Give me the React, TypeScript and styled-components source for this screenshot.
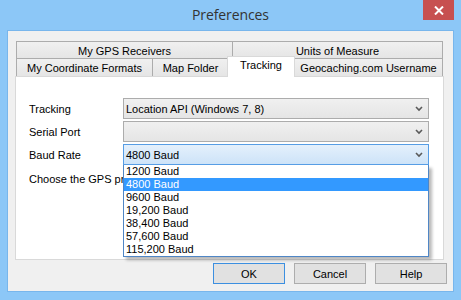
import React from "react";
import styled, { createGlobalStyle } from "styled-components";

const Global = createGlobalStyle`
  html, body { margin: 0; padding: 0; }
  body { width: 461px; height: 300px; overflow: hidden; font-family: "Liberation Sans", Arial, sans-serif; }
`;

const Window = styled.div`
  width: 461px;
  height: 300px;
  background: #8cc7f7;
  display: flex;
  flex-direction: column;
  box-sizing: border-box;
`;

const TitleBar = styled.div`
  height: 30px;
  flex: none;
  display: grid;
  grid-template-columns: 1fr auto 1fr;
  align-items: start;
`;

const Title = styled.div`
  grid-column: 2;
  font-family: "Open Sans", "Liberation Sans", Arial, sans-serif;
  font-size: 14px;
  color: #333;
  line-height: 30px;
  letter-spacing: -0.1px;
`;

const CloseButton = styled.div`
  grid-column: 3;
  justify-self: end;
  margin-right: 7px;
  width: 31px;
  height: 20px;
  background: #c75050;
  display: flex;
  align-items: center;
  justify-content: center;
`;

const Client = styled.div`
  flex: 1;
  margin: 0 7px 8px 7px;
  border: 1px solid #78b6ec;
  background: #f0f0f0;
  padding: 10px 6px 0 7px;
  display: flex;
  flex-direction: column;
  font-size: 11px;
  color: #000;
`;

const TabControl = styled.div`
  width: 429px;
  display: flex;
  flex-direction: column;
`;

const TabRow = styled.div<{ $h: number }>`
  display: flex;
  align-items: flex-end;
  height: ${(p) => p.$h}px;
  padding-left: 1px;
`;

const Tab = styled.div<{ $w: number; $first?: boolean; $selected?: boolean }>`
  box-sizing: border-box;
  width: ${(p) => p.$w}px;
  height: 100%;
  margin-left: ${(p) => (p.$first ? 0 : p.$selected ? -2 : -1)}px;
  border: 1px solid #acacac;
  border-bottom: none;
  background: linear-gradient(#f0f0f0, #e5e5e5);
  display: flex;
  align-items: center;
  justify-content: center;
  white-space: nowrap;
  padding-top: 1px;
  ${(p) =>
    p.$selected &&
    `
    background: #fff;
    border-color: #d9d9d9;
    align-self: flex-end;
    margin-top: -2px;
    margin-bottom: -1px;
    height: 21px;
    position: relative;
    z-index: 1;
    align-items: flex-start;
    padding-top: 2px;
  `}
`;

const Panel = styled.div`
  box-sizing: border-box;
  height: 184px;
  border: 1px solid #d9d9d9;
  background: #fff;
  padding: 21px 13px 0 13px;
`;

const FormGrid = styled.div`
  display: grid;
  grid-template-columns: 94px 306px;
  grid-auto-rows: 21px;
  row-gap: 2px;
  align-items: center;
`;

const Label = styled.div`
  white-space: nowrap;
`;

const ClippedLabel = styled.div`
  grid-column: 1;
  margin-top: 3px;
  white-space: nowrap;
  overflow: hidden;
  width: 94px;
`;

const ComboWrap = styled.div`
  position: relative;
  height: 21px;
`;

const Combo = styled.div<{ $focused?: boolean }>`
  box-sizing: border-box;
  height: 21px;
  border: 1px solid ${(p) => (p.$focused ? "#569de5" : "#acacac")};
  background: ${(p) =>
    p.$focused ? "linear-gradient(#e4f0fc, #cde3f8)" : "linear-gradient(#f0f0f0, #e5e5e5)"};
  display: flex;
  align-items: center;
  justify-content: space-between;
  padding: 0 5px 0 2px;
`;

const DropList = styled.div`
  position: absolute;
  top: 21px;
  left: 0;
  width: 306px;
  box-sizing: border-box;
  border: 1px solid #4f86c6;
  border-top: none;
  background: #fff;
  box-shadow: 3px 3px 3px rgba(0, 0, 0, 0.28);
  z-index: 5;
`;

const Option = styled.div<{ $active?: boolean }>`
  height: 13px;
  line-height: 13px;
  padding-left: 2px;
  background: ${(p) => (p.$active ? "#3399ff" : "transparent")};
  color: ${(p) => (p.$active ? "#fff" : "#000")};
  white-space: nowrap;
`;

const ButtonRow = styled.div`
  display: flex;
  justify-content: flex-end;
  gap: 9px;
  margin-top: 3px;
`;

const Button = styled.div<{ $default?: boolean }>`
  box-sizing: border-box;
  width: 72px;
  height: 21px;
  border: 1px solid ${(p) => (p.$default ? "#3c8fe0" : "#adadad")};
  background: #e1e1e1;
  display: flex;
  align-items: center;
  justify-content: center;
`;

const Chevron = () => (
  <svg width="8" height="6" viewBox="0 0 8 6">
    <path d="M1 1 L4 4 L7 1" fill="none" stroke="#5a5a5a" strokeWidth="1.6" />
  </svg>
);

const bauds = ["1200 Baud", "4800 Baud", "9600 Baud", "19,200 Baud", "38,400 Baud", "57,600 Baud", "115,200 Baud"];

export default function App() {
  return (
    <>
      <Global />
      <Window>
        <TitleBar>
          <Title>Preferences</Title>
          <CloseButton>
            <svg width="10" height="9" viewBox="0 0 10 9">
              <path d="M1 0.5 L9 8.5 M9 0.5 L1 8.5" stroke="#fff" strokeWidth="2" />
            </svg>
          </CloseButton>
        </TitleBar>
        <Client>
          <TabControl>
            <TabRow $h={17}>
              <Tab $w={217} $first>My GPS Receivers</Tab>
              <Tab $w={211}>Units of Measure</Tab>
            </TabRow>
            <TabRow $h={18}>
              <Tab $w={137} $first>My Coordinate Formats</Tab>
              <Tab $w={77}>Map Folder</Tab>
              <Tab $w={68} $selected>Tracking</Tab>
              <Tab $w={149}>Geocaching.com Username</Tab>
            </TabRow>
            <Panel>
              <FormGrid>
                <Label>Tracking</Label>
                <Combo>
                  <span>Location API (Windows 7, 8)</span>
                  <Chevron />
                </Combo>
                <Label>Serial Port</Label>
                <Combo>
                  <span />
                  <Chevron />
                </Combo>
                <Label>Baud Rate</Label>
                <ComboWrap>
                  <Combo $focused>
                    <span>4800 Baud</span>
                    <Chevron />
                  </Combo>
                  <DropList>
                    {bauds.map((b) => (
                      <Option key={b} $active={b === "4800 Baud"}>
                        {b}
                      </Option>
                    ))}
                  </DropList>
                </ComboWrap>
                <ClippedLabel>Choose the GPS protocol</ClippedLabel>
              </FormGrid>
            </Panel>
          </TabControl>
          <ButtonRow>
            <Button $default>OK</Button>
            <Button>Cancel</Button>
            <Button>Help</Button>
          </ButtonRow>
        </Client>
      </Window>
    </>
  );
}
